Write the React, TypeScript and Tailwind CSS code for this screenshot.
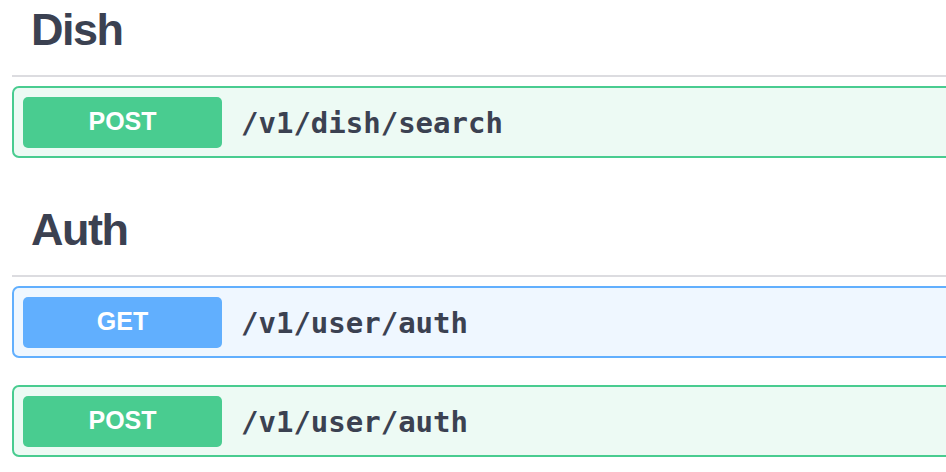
const ops = [
  {
    tag: "Dish",
    items: [{ method: "POST", path: "/v1/dish/search" }],
  },
  {
    tag: "Auth",
    items: [
      { method: "GET", path: "/v1/user/auth" },
      { method: "POST", path: "/v1/user/auth" },
    ],
  },
];

function OpBlock({ method, path }: { method: string; path: string }) {
  const isGet = method === "GET";
  return (
    <div
      className={
        "flex h-[72px] items-center rounded-[7px] border-2 pl-[9px] " +
        (isGet ? "border-[#61affe] bg-[#eff7ff]" : "border-[#49cc90] bg-[#edfaf4]")
      }
    >
      <span
        className={
          "flex h-[51px] w-[199px] items-center justify-center rounded-[5px] text-[25px] font-bold text-white " +
          (isGet ? "bg-[#61affe]" : "bg-[#49cc90]")
        }
        style={{ fontFamily: '"Liberation Sans", Arial, sans-serif' }}
      >
        {method}
      </span>
      <span
        className="ml-[19px] mt-[3px] text-[29px] font-bold text-[#3b4151]"
        style={{ fontFamily: '"DejaVu Sans Mono", "Liberation Mono", monospace' }}
      >
        {path}
      </span>
    </div>
  );
}

export default function App() {
  return (
    <div className="h-[472px] w-[946px] overflow-hidden bg-white">
      <div className="w-[1000px] pl-[12px]">
        {ops.map((group, gi) => (
          <section key={group.tag} className={gi === 0 ? "" : "mt-[42px]"}>
            <h4
              className="border-b-2 border-[#dcdce0] pb-[23px] pl-[19px] pt-[7px] text-[45px] font-bold leading-[45px] tracking-[-1.5px] text-[#3b4151]"
              style={{ fontFamily: '"Liberation Sans", Arial, sans-serif' }}
            >
              {group.tag}
            </h4>
            <div className="mt-[9px] flex flex-col gap-[27px]">
              {group.items.map((op, i) => (
                <OpBlock key={i} method={op.method} path={op.path} />
              ))}
            </div>
          </section>
        ))}
      </div>
    </div>
  );
}
